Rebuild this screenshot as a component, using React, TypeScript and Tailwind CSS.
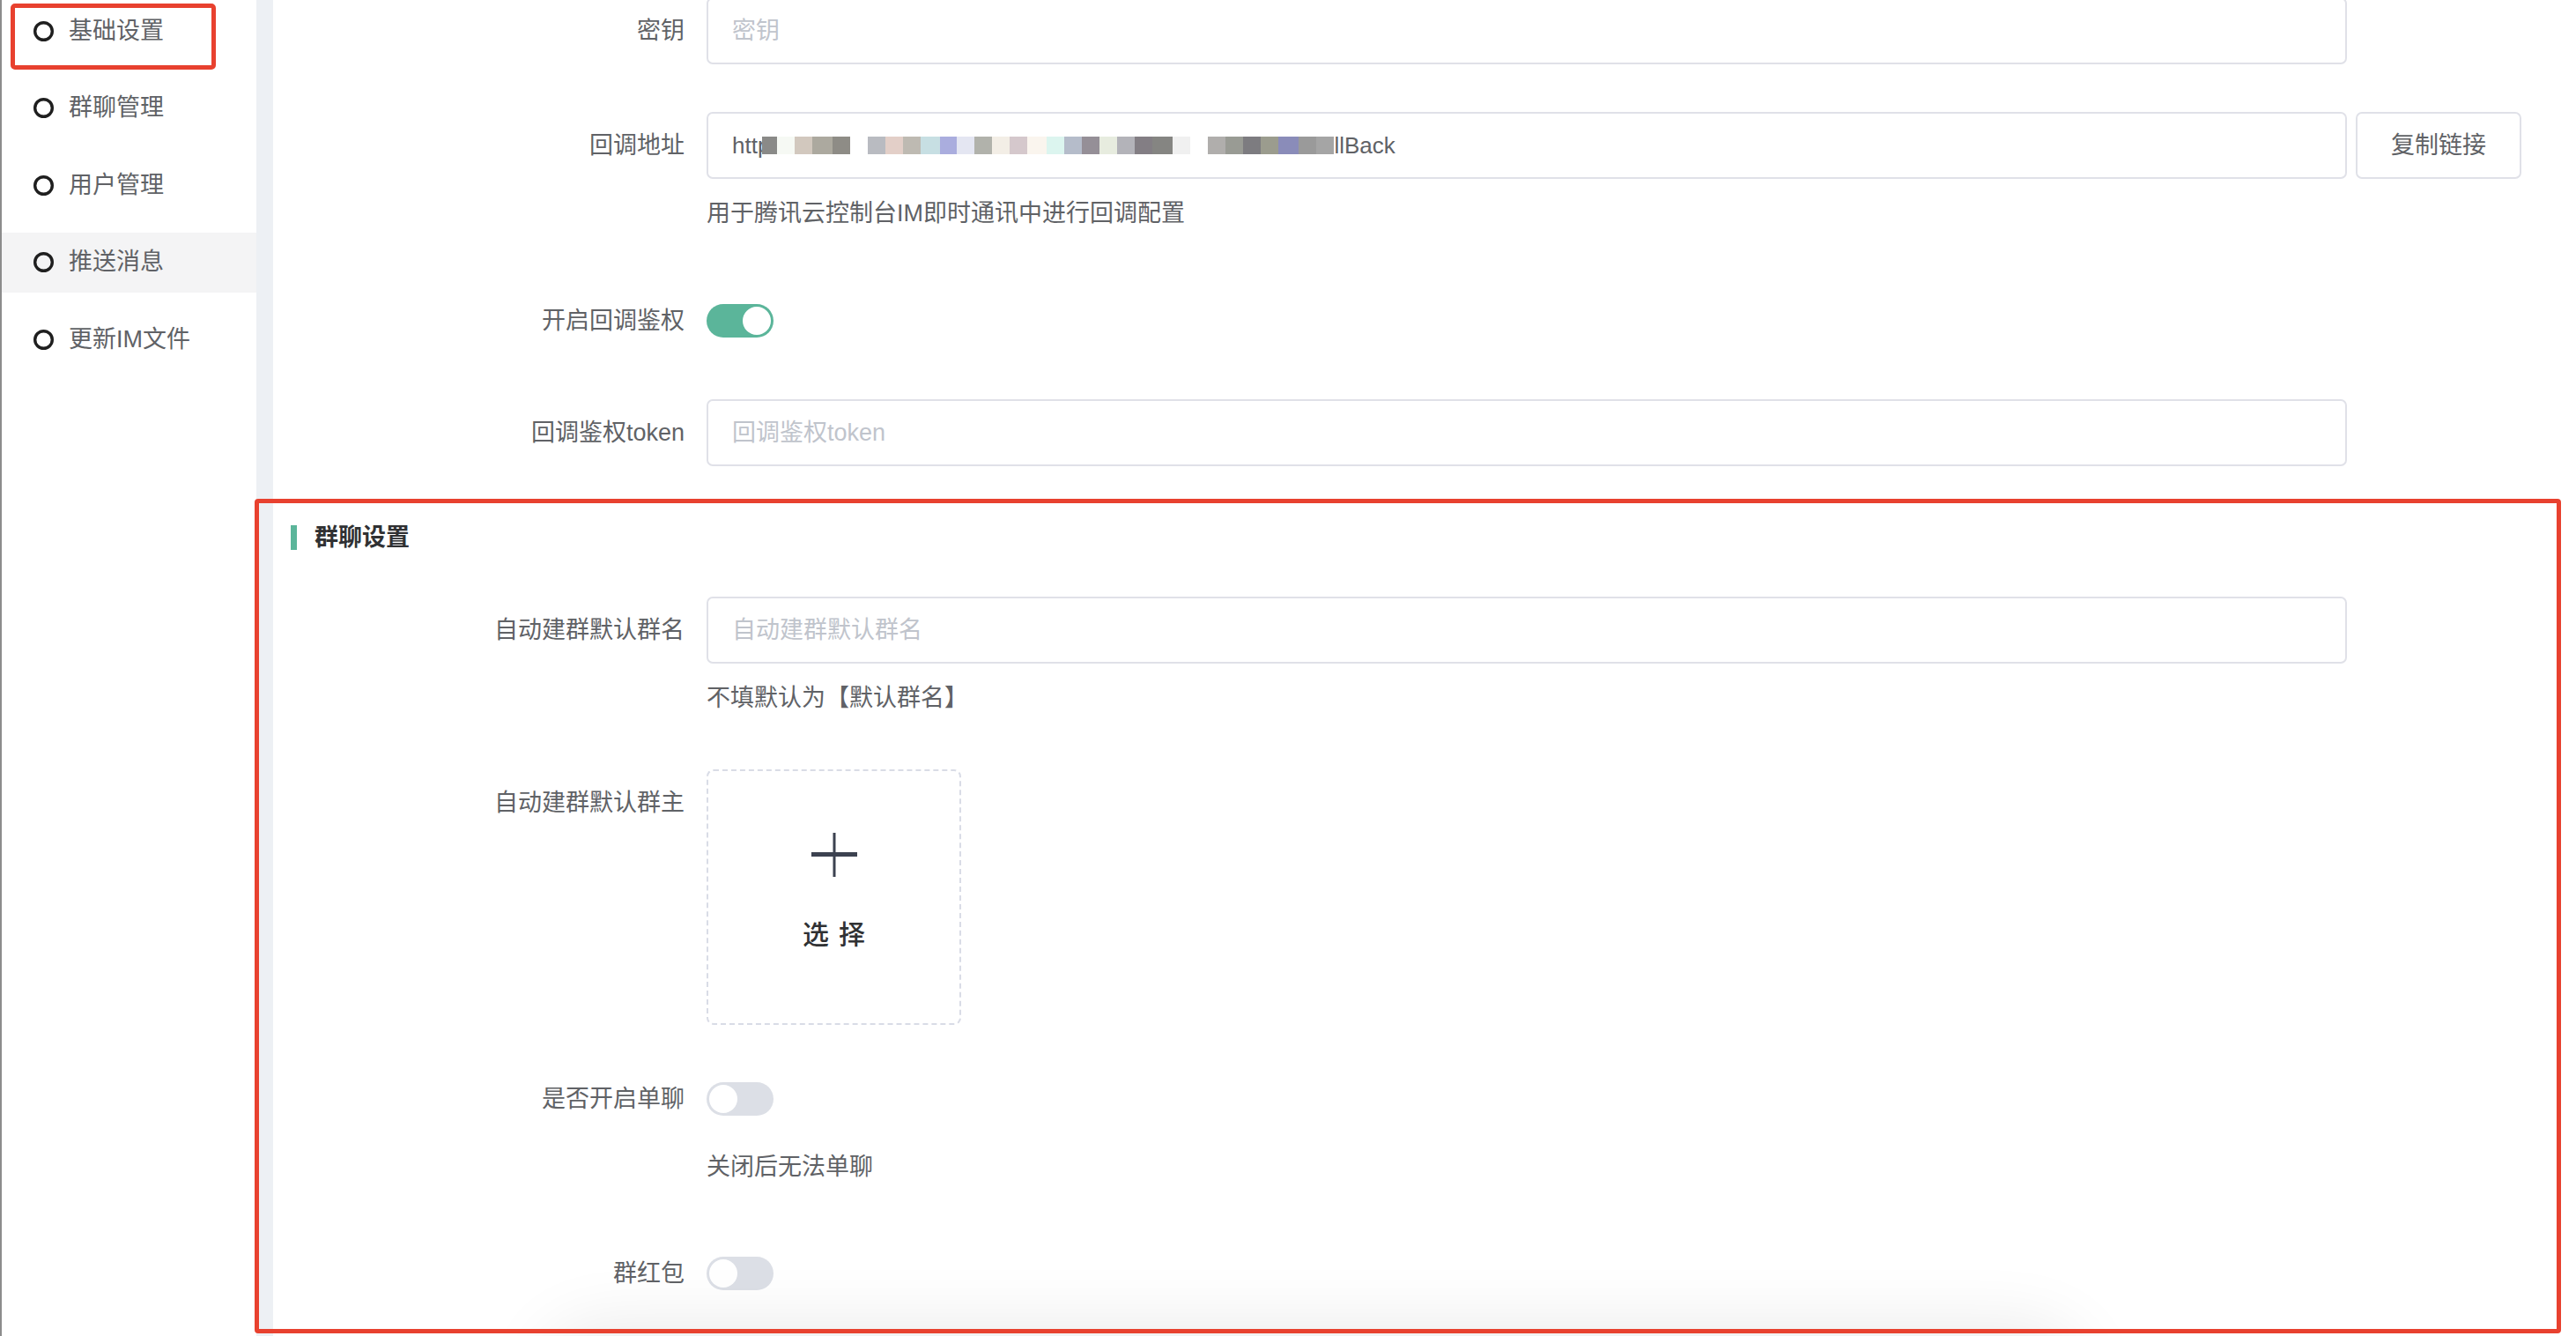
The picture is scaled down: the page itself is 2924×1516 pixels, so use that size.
import React from "react";

const NAV = ["基础设置", "群聊管理", "用户管理", "推送消息", "更新IM文件"];

// pixelated (censored) part of the callback url
const MOSAIC = [
  ["#8a8a88", 17], ["#f6f9f4", 20], ["#d2c8be", 20], ["#aca99f", 23], ["#8e8c86", 20],
  ["#ffffff", 20], ["#b9bbc1", 20], ["#e3cfc8", 20], ["#bebab2", 20], ["#c7dfe3", 22],
  ["#aaadde", 19], ["#e4e6f2", 20], ["#b1b2ab", 20], ["#f3eee6", 20], ["#d5c8cc", 20],
  ["#faf5ee", 22], ["#dcf5ef", 20], ["#b5bcca", 20], ["#958f97", 20], ["#e7ecdf", 20],
  ["#b3b3b9", 20], ["#837e84", 20], ["#858582", 23], ["#f0f0f0", 20], ["#ffffff", 20],
  ["#b0aeac", 20], ["#999b94", 20], ["#7d7c80", 20], ["#9b9c8e", 20], ["#8a8cb9", 23],
  ["#9a9a9a", 20], ["#a5a5a5", 20],
] as const;

function Toggle({ on }: { on: boolean }) {
  return (
    <div
      className={`w-[76px] h-[38px] rounded-full p-[3px] flex ${
        on ? "bg-[#5bb59a] justify-end" : "bg-[#dcdfe6] justify-start"
      }`}
    >
      <div className="w-[32px] h-[32px] rounded-full bg-white" />
    </div>
  );
}

function Field({ placeholder, children }: { placeholder?: string; children?: React.ReactNode }) {
  return (
    <div className="w-[1862px] h-[76px] border-2 border-[#e0e1e8] rounded-[7px] px-[27px] flex items-center bg-white">
      {children ?? <span className="text-[#c0c4cc]">{placeholder}</span>}
    </div>
  );
}

function FormItem({
  label,
  help,
  className = "",
  children,
}: {
  label: string;
  help?: string;
  className?: string;
  children: React.ReactNode;
}) {
  return (
    <div className={`flex ${className}`}>
      <div className="w-[467px] shrink-0 text-right h-[76px] leading-[76px] text-[#606266]">{label}</div>
      <div className="ml-[25px] flex flex-col">
        <div className="min-h-[76px] flex items-center">{children}</div>
        {help && <div className="mt-[19px] h-[40px] leading-[40px] text-[#606266]">{help}</div>}
      </div>
    </div>
  );
}

export default function App() {
  return (
    <div className="relative w-[2924px] h-[1516px] overflow-hidden bg-white flex text-[27px] font-['Liberation_Sans','Noto_Sans_CJK_SC',sans-serif]">
      {/* Sidebar */}
      <aside className="w-[291px] shrink-0 border-l-2 border-[#8c8c8c] bg-white flex flex-col gap-[19.5px] pt-[1px]">
        {NAV.map((item, i) => (
          <div
            key={item}
            className={`h-[68px] shrink-0 flex items-center pl-[36px] gap-[17px] text-[#606266] ${
              i === 3 ? "bg-[#f4f4f5]" : ""
            }`}
          >
            <svg width="23" height="23" viewBox="0 0 23 23">
              <circle cx="11.5" cy="11.5" r="9.8" fill="none" stroke="#1f1f1f" strokeWidth="3.4" />
            </svg>
            <span>{item}</span>
          </div>
        ))}
      </aside>
      <div className="w-[19px] shrink-0 bg-[#edf0f4]" />

      {/* Main form */}
      <main className="flex-1 flex flex-col">
        <FormItem label="密钥" className="-mt-[3px]">
          <Field placeholder="密钥" />
        </FormItem>

        <FormItem label="回调地址" className="mt-[54px]" help="用于腾讯云控制台IM即时通讯中进行回调配置">
          <Field>
            <span className="text-[#606266] font-['Liberation_Sans',sans-serif] text-[26px]">http</span>
            <span className="flex -ml-[9px] h-[20px]">
              {MOSAIC.map(([c, w], i) => (
                <span key={i} className="h-[20px] block" style={{ backgroundColor: c, width: w }} />
              ))}
            </span>
            <span className="text-[#606266] font-['Liberation_Sans',sans-serif] text-[26px]">llBack</span>
          </Field>
          <button className="ml-[10px] w-[188px] h-[76px] border-2 border-[#e0e1e8] rounded-[7px] flex items-center justify-center text-[#606266] bg-white">
            复制链接
          </button>
        </FormItem>

        <FormItem label="开启回调鉴权" className="mt-[64px]">
          <Toggle on />
        </FormItem>

        <FormItem label="回调鉴权token" className="mt-[51px]">
          <Field placeholder="回调鉴权token" />
        </FormItem>

        {/* 群聊设置 */}
        <div className="mt-[61px] h-[40px] flex items-center pl-[20px]">
          <div className="w-[7px] h-[28px] bg-[#5bb59a]" />
          <div className="ml-[20px] font-bold text-[#303133]">群聊设置</div>
        </div>

        <FormItem label="自动建群默认群名" className="mt-[47px]" help="不填默认为【默认群名】">
          <Field placeholder="自动建群默认群名" />
        </FormItem>

        <FormItem label="自动建群默认群主" className="mt-[61px]">
          <div className="w-[289px] h-[290px] border-2 border-dashed border-[#d9dce6] rounded-[8px] flex flex-col items-center pt-[70px]">
            <svg width="52" height="50" viewBox="0 0 52 50">
              <rect x="0" y="22" width="52" height="5" fill="#3c4250" />
              <rect x="24.5" y="0" width="3" height="50" fill="#3c4250" />
            </svg>
            <div className="mt-[51px] flex gap-[11px] text-[30px] leading-[30px] font-medium text-[#303133]">
              <span>选</span>
              <span>择</span>
            </div>
          </div>
        </FormItem>

        <FormItem label="是否开启单聊" className="mt-[46px]" help="关闭后无法单聊">
          <Toggle on={false} />
        </FormItem>

        <FormItem label="群红包" className="mt-[63px]">
          <Toggle on={false} />
        </FormItem>
      </main>

      {/* shadow of a floating bar below the fold */}
      <div className="absolute left-[640px] top-[1530px] w-[1700px] h-[80px] rounded-full bg-white shadow-[0_0_80px_24px_rgba(0,0,0,0.09)] pointer-events-none" />

      {/* annotation boxes */}
      <div className="absolute left-[12px] top-[4px] w-[233px] h-[75px] border-[5px] border-[#e8412f] rounded-[5px] pointer-events-none" />
      <div className="absolute left-[289px] top-[566px] w-[2618px] h-[947px] border-[5px] border-[#e8412f] rounded-[4px] pointer-events-none" />
    </div>
  );
}
